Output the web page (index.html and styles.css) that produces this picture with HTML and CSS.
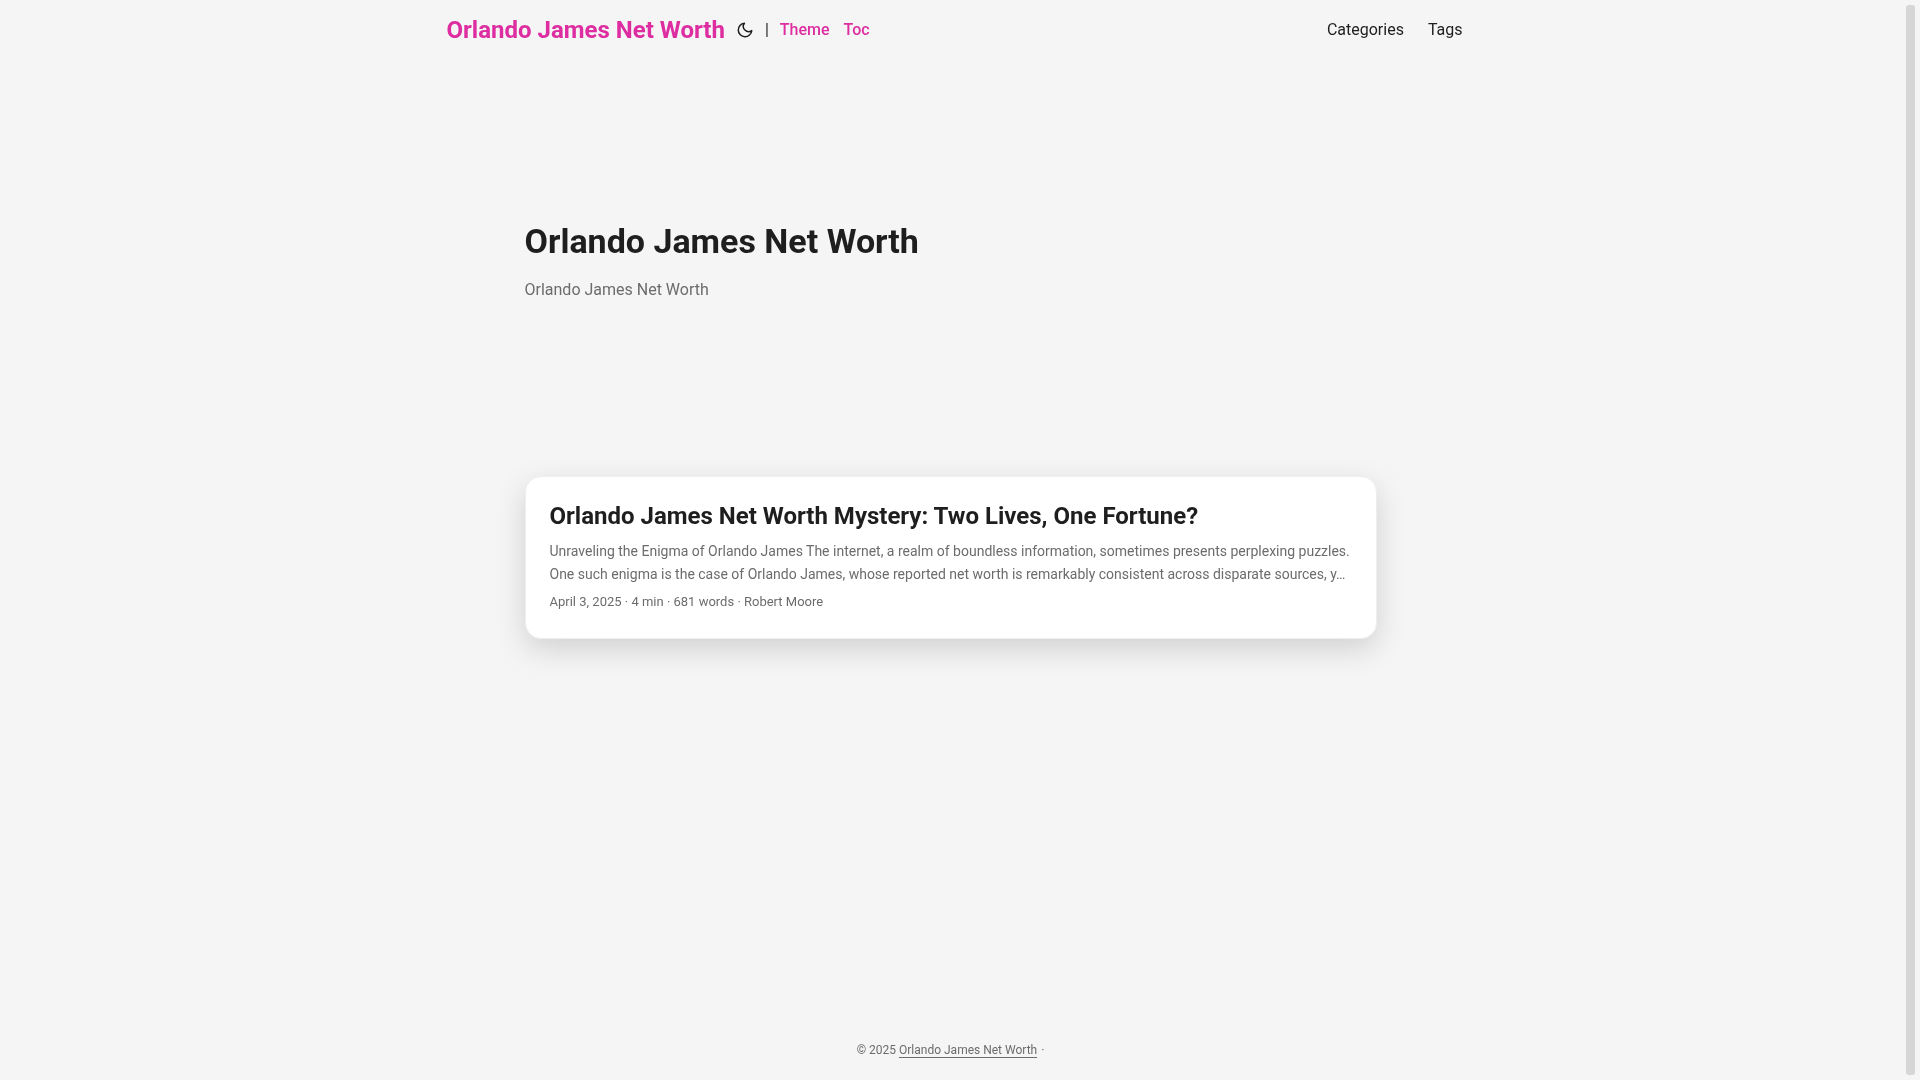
FILE: index.html
```html
<!DOCTYPE html>
<html lang="en">

<head>
    <meta charset="UTF-8">
    <meta name="viewport" content="width=device-width, initial-scale=1">
    <title>Orlando James Net Worth</title>
    <link rel="stylesheet" href="styles.css">
</head>

<body>
    <div class="page">
        <header class="header">
            <nav class="nav">
                <div class="logo">
                    <a class="logo-link" href="#">Orlando James Net Worth</a>
                    <button class="theme-toggle" type="button" aria-label="Toggle theme">
                        <svg width="18" height="18" viewBox="0 0 24 24" fill="none" stroke="currentColor"
                            stroke-width="2" stroke-linecap="round" stroke-linejoin="round">
                            <path d="M21 12.79A9 9 0 1 1 11.21 3 7 7 0 0 0 21 12.79z"></path>
                        </svg>
                    </button>
                    <span class="separator">|</span>
                    <a class="switch" href="#">Theme</a>
                    <a class="switch" href="#">Toc</a>
                </div>
                <ul class="menu">
                    <li><a href="#">Categories</a></li>
                    <li><a href="#">Tags</a></li>
                </ul>
            </nav>
        </header>

        <main class="main">
            <article class="first-entry">
                <h1>Orlando James Net Worth</h1>
                <p>Orlando James Net Worth</p>
            </article>

            <article class="post-entry">
                <h2><a href="#">Orlando James Net Worth Mystery: Two Lives, One Fortune?</a></h2>
                <p class="entry-content">Unraveling the Enigma of Orlando James The internet, a realm of boundless information, sometimes presents perplexing puzzles. One such enigma is the case of Orlando James, whose reported net worth is remarkably consistent across disparate sources, y…</p>
                <footer class="entry-footer">April 3, 2025 · 4 min · 681 words · Robert Moore</footer>
            </article>
        </main>

        <footer class="footer">
            <span>© 2025 <a href="#">Orlando James Net Worth</a></span>
            <span class="dot">·</span>
        </footer>
    </div>

    <div class="scrollbar" aria-hidden="true">
        <div class="scrollbar-thumb"></div>
    </div>
</body>

</html>
```

FILE: styles.css
```css
:root {
    --gap: 24px;
    --main-width: 852px;
    --nav-width: 1024px;
    --bar-height: 60px;
    --theme: #f5f5f5;
    --entry: #fff;
    --primary: #1e1e1e;
    --secondary: #6c6c6c;
    --tertiary: #d6d6d6;
    --accent: #dd2da0;
}

* {
    margin: 0;
    padding: 0;
    box-sizing: border-box;
}

body {
    display: flex;
    background: var(--theme);
    color: var(--primary);
    font-family: Roboto, "Open Sans", sans-serif;
    font-size: 16px;
    line-height: 26px;
}

a {
    color: inherit;
    text-decoration: none;
}

.page {
    flex: 1;
    min-width: 0;
    will-change: transform;
}

/* header */
.nav {
    display: flex;
    justify-content: space-between;
    max-width: calc(var(--nav-width) + var(--gap) * 2);
    margin: 0 auto;
    padding: 0 var(--gap);
    line-height: var(--bar-height);
}

.logo {
    display: flex;
    align-items: center;
    padding-left: 8px;
}

.logo-link {
    color: var(--accent);
    font-size: 24px;
    font-weight: 700;
}

.theme-toggle {
    display: flex;
    margin: 0 11px;
    border: none;
    background: none;
    color: inherit;
    cursor: pointer;
}

.separator {
    margin-right: 11px;
}

.switch {
    margin-right: 14px;
    color: var(--accent);
    font-weight: 500;
}

.menu {
    display: flex;
    gap: var(--gap);
    list-style: none;
}

/* list */
.main {
    min-height: calc(100vh - var(--bar-height) * 2);
    max-width: calc(var(--main-width) + var(--gap) * 2);
    margin: 0 auto;
    padding: var(--gap);
}

.first-entry {
    display: flex;
    flex-direction: column;
    justify-content: center;
    min-height: 320px;
    margin: var(--gap) 0 calc(var(--gap) * 2);
}

.first-entry h1 {
    font-size: 34px;
    line-height: 44px;
}

.first-entry p {
    margin: 14px 0;
    color: var(--secondary);
}

.post-entry {
    padding: var(--gap);
    background: var(--entry);
    border: 1px solid #eee;
    border-radius: 16px;
    box-shadow: 0 10px 30px rgba(0, 0, 0, 0.15);
}

.post-entry h2 {
    font-size: 24px;
    line-height: 31px;
}

.entry-content {
    margin: 8px 0 4px;
    color: var(--secondary);
    font-size: 14px;
    line-height: 23px;
}

.entry-footer {
    color: var(--secondary);
    font-size: 13px;
    line-height: 24px;
}

/* footer */
.footer {
    padding: 18px var(--gap);
    color: var(--secondary);
    font-size: 12px;
    line-height: 24px;
    text-align: center;
}

.footer a {
    border-bottom: 1px solid var(--secondary);
}

.dot {
    margin-left: 1px;
}

/* scrollbar */
.scrollbar {
    display: flex;
    position: sticky;
    top: 0;
    width: 19px;
    height: 100vh;
    padding: 5px;
}

.scrollbar-thumb {
    flex: 1;
    border-radius: 3px;
    background: var(--tertiary);
}
```
